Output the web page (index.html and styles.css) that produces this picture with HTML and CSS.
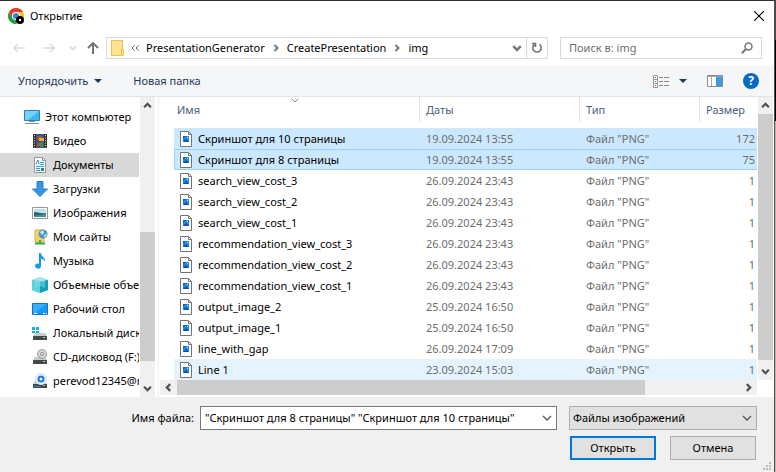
FILE: index.html
```html
<!DOCTYPE html>
<html lang="ru">
<head>
<meta charset="utf-8">
<title>Открытие</title>
<link rel="stylesheet" href="styles.css">
</head>
<body>
<svg class="defs" aria-hidden="true">
  <symbol id="png" viewBox="0 0 12 16">
    <path d="M.5.5h8l3 3v12H.5z" fill="#fff" stroke="#737373"/>
    <path d="M8.5.5v3h3" fill="none" stroke="#737373"/>
    <path d="M3 5h6v6H3z" fill="#2089e0"/>
    <path d="M3 5h3L3 8z" fill="#1263b8"/>
    <path d="M3 11l3-3 3 3z" fill="#0d50a8"/>
    <path d="M7 6h1v1H7z" fill="#b8e2fb"/>
  </symbol>
  <symbol id="drive" viewBox="0 0 16 16">
    <path d="M3 8h10l2 3H1z" fill="#c9cbcc"/>
    <path d="M1 11h14v4H1z" fill="#45494c"/>
    <path d="M11 12h2v1h-2z" fill="#69e58b"/>
  </symbol>
  <symbol id="chev" viewBox="0 0 8 8"><path d="M1 2.5L4 5.5L7 2.5" fill="none" stroke="currentColor" stroke-width="2"/></symbol>
  <symbol id="thin" viewBox="0 0 10 6"><path d="M1 1L5 5L9 1" fill="none" stroke="currentColor" stroke-width="1.3"/></symbol>
</svg>
<div class="dialog">
  <header class="title">
    <svg width="16" height="16" viewBox="0 0 16 16"><circle cx="8" cy="8" r="8" fill="#fbc116"/><path d="M1.1 4A8 8 0 0 1 14.9 4H8L4.5 10z" fill="#e33b2e"/><path d="M1.1 4A8 8 0 0 0 8 16L11.5 10 8 8 4.5 10z" fill="#229a48"/><circle cx="8" cy="8" r="4" fill="#fff"/><circle cx="8" cy="8" r="3" fill="#347fe8"/><circle cx="12" cy="12" r="4" fill="#000"/><circle cx="12" cy="12" r="1.2" fill="#fff"/></svg>
    <h1>Открытие</h1>
    <button class="close" aria-label="Закрыть"><svg width="10" height="10" viewBox="0 0 10 10"><path d="M0 0L10 10M10 0L0 10" stroke="#000" stroke-width="1.1"/></svg></button>
  </header>
  <nav class="nav">
    <div class="arrows">
      <button aria-label="Назад"><svg width="12" height="10" viewBox="0 0 12 10"><path d="M12 5H1M5 1L1 5L5 9" fill="none" stroke="#dcdcdc" stroke-width="1.6"/></svg></button>
      <button aria-label="Вперёд"><svg width="12" height="10" viewBox="0 0 12 10"><path d="M0 5H11M7 1L11 5L7 9" fill="none" stroke="#dcdcdc" stroke-width="1.6"/></svg></button>
      <button class="recent" aria-label="Последние"><svg width="8" height="8"><use href="#chev"/></svg></button>
      <button aria-label="Вверх"><svg width="12" height="12" viewBox="0 0 12 12"><path d="M6 12V1M1 6L6 1L11 6" fill="none" stroke="#757575" stroke-width="2"/></svg></button>
    </div>
    <div class="address">
      <svg class="folder" width="13" height="16" viewBox="0 0 13 16"><path d="M.5.5h11v15H.5z" fill="#ffe391" stroke="#e9c550"/><path d="M10.5 9.500h2v6h-2z" fill="#ffe391" stroke="#e9c550"/></svg>
      <svg class="dbl" width="8" height="6" viewBox="0 0 8 6"><path d="M3.500.5L1 3l2.500 2.500M7.500.5L5 3l2.500 2.500" fill="none" stroke="#666"/></svg>
      <a href="#pg">PresentationGenerator</a>
      <svg class="crumb" width="8" height="8"><use href="#chev"/></svg>
      <a href="#cp">CreatePresentation</a>
      <svg class="crumb" width="8" height="8"><use href="#chev"/></svg>
      <a href="#img">img</a>
      <button class="drop" aria-label="Предыдущие расположения"><svg width="10" height="10"><use href="#chev"/></svg></button>
      <button class="refresh" aria-label="Обновить"><svg width="12" height="12" viewBox="0 0 12 12"><path d="M3.500 2.500A4.200 4.200 0 1 0 8.500 2.500M1 1.500H4.500V5" fill="none" stroke="#757575" stroke-width="1.6"/></svg></button>
    </div>
    <div class="search">
      <input type="text" placeholder="Поиск в: img" aria-label="Поиск в: img">
      <svg width="12" height="12" viewBox="0 0 12 12"><circle cx="7.500" cy="4.500" r="3.500" fill="none" stroke="#777" stroke-width="1.5"/><path d="M5 7L.8 11.200" stroke="#777" stroke-width="2"/></svg>
    </div>
  </nav>
  <div class="tools">
    <button class="organize">Упорядочить<i class="tri"></i></button>
    <button>Новая папка</button>
    <div class="right">
      <button class="view" aria-label="Вид"><svg width="16" height="13" viewBox="0 0 16 13"><path d="M.5.5h4v12h-4zM.5 4.500h4M.5 8.500h4" fill="#fff" stroke="#999"/><path d="M2 2h1v1H2z" fill="#555"/><path d="M2 6h1v1H2z" fill="#2583d8"/><path d="M2 10h1v1H2z" fill="#d02525"/><path d="M6 2.500h4m1 0h5M6 6.500h4m1 0h5M6 10.500h4m1 0h5" stroke="#888"/></svg><i class="tri"></i></button>
      <button aria-label="Область просмотра"><svg width="16" height="12" viewBox="0 0 16 12"><path d="M.5.5h15v11H.5z" fill="#fff" stroke="#888"/><path d="M1 1h14v1H1z" fill="#aaa"/><path d="M4.500 2v9" stroke="#aaa"/><path d="M9 2h6v9H9z" fill="#3a9ce5"/></svg></button>
      <button class="help" aria-label="Справка">?</button>
    </div>
  </div>
  <main class="body">
    <aside class="side">
      <ul class="tree">
        <li class="root"><svg width="16" height="16" viewBox="0 0 16 16"><path d="M.5 1.500h15v10H.5z" fill="#42b4f2" stroke="#397ca5"/><path d="M1 2h14L4 11H1z" fill="#75d2fb"/><path d="M5 12h6v1H5zM1 14h14v1H1z" fill="#8099a9"/></svg><span>Этот компьютер</span></li>
        <li><svg width="16" height="16" viewBox="0 0 16 16"><path d="M1 1h14v14H1z" fill="#333"/><path d="M4 1h8v14H4z" fill="#36558e"/><path d="M5 3h5v4H5z" fill="#b14c2d"/><path d="M7 5h5v3H7z" fill="#e8b234"/><path d="M5 10h6v3H5z" fill="#c64e30"/><path d="M8 9h3v5H8z" fill="#56863b"/><path d="M2.500 2v13M13.500 2v13" stroke="#ddd" stroke-dasharray="1 1.500"/></svg><span>Видео</span></li>
        <li class="on"><svg width="16" height="16" viewBox="0 0 16 16"><path d="M2.500.5h8l3 3v12h-11z" fill="#fff" stroke="#8c989e"/><path d="M10.500.5v3h3" fill="none" stroke="#8c989e"/><path d="M4 7l2-4 1 4M8 5.500h4M8 7.500h4M4 9.500h8M4 11.500h4M4 13.500h4" fill="none" stroke="#259cdb"/><path d="M9 11h3v3H9z" fill="#43816b"/></svg><span>Документы</span></li>
        <li><svg width="16" height="16" viewBox="0 0 16 16"><path d="M5 .5h6V8h4.500L8 15.500.5 8H5z" fill="#3595e5" stroke="#2a7cc7"/></svg><span>Загрузки</span></li>
        <li><svg width="16" height="16" viewBox="0 0 16 16"><path d="M.5 2.500h15v11H.5z" fill="#fff" stroke="#969696"/><path d="M2 4h12v8H2z" fill="#b9e1f1"/><path d="M2 7c5 0 8 2 12 1v4H2z" fill="#2a6770"/><path d="M2 11l12-2v3H2z" fill="#4b8ea4"/></svg><span>Изображения</span></li>
        <li><svg width="16" height="16" viewBox="0 0 16 16"><path d="M3 1h9v12H3z" fill="#f5d365" stroke="#dbb13f"/><circle cx="11" cy="5" r="4.500" fill="#4b9bc7"/><path d="M8 3l3-2 1 3-2 2zM12 6l3-1-2 4z" fill="#c8e6ef"/><path d="M8 11v3M3 14.500h10" stroke="#36a852" stroke-width="2"/></svg><span>Мои сайты</span></li>
        <li><svg width="16" height="16" viewBox="0 0 16 16"><path d="M7 0h2c0 4 5 4 4 9-1-3-2-3-4-3v7c0 4-6 3-6 0 0-2 2-3 4-2z" fill="#159ce9"/></svg><span>Музыка</span></li>
        <li><svg width="16" height="16" viewBox="0 0 16 16"><path d="M0 3l8-3 8 3v10l-8 3-8-3z" fill="#35bdd0"/><path d="M0 3l8-3 8 3-8 2z" fill="#a2eaf0"/><path d="M0 3l8 2v11l-8-3z" fill="#5fd1dc"/><path d="M8 5v11l8-3V3z" fill="#159fb8"/><path d="M3 4l5-2 5 2v7l-5-2-5 2z" fill="#88dce3" opacity=".5"/></svg><span>Объемные объекты</span></li>
        <li><svg width="16" height="16" viewBox="0 0 16 16"><path d="M.5 2.500h15v11H.5z" fill="#169af4" stroke="#1474bd"/><path d="M1 3h13L3 12H1z" fill="#36b1ff"/><path d="M2 12.500h3m6 0h2m1 0h1" stroke="#fff"/></svg><span>Рабочий стол</span></li>
        <li><svg width="16" height="16" viewBox="0 0 16 16"><use href="#drive"/><path d="M0 2h3v3H0zM4 2h3v3H4zM0 6h3v2H0zM4 6h3v2H4z" fill="#18ace8"/></svg><span>Локальный диск (C:)</span></li>
        <li><svg width="16" height="16" viewBox="0 0 16 16"><use href="#drive"/><circle cx="10" cy="5" r="4.500" fill="#d6d8d8" stroke="#999"/><circle cx="10" cy="5" r="1.500" fill="#fff" stroke="#888"/></svg><span>CD-дисковод (F:)</span></li>
        <li><svg width="16" height="16" viewBox="0 0 16 16"><use href="#drive"/><circle cx="9" cy="6" r="5.500" fill="#f2f6fb" stroke="#d3dce5"/><circle cx="9" cy="6" r="2.500" fill="none" stroke="#1676e2" stroke-width="2"/><path d="M2 13.500h6" stroke="#2586ed"/></svg><span>perevod12345@mail.ru</span></li>
      </ul>
      <div class="vbar"><svg class="up" width="9" height="9"><use href="#chev"/></svg><div class="thumb low"></div><svg class="down" width="9" height="9"><use href="#chev"/></svg></div>
    </aside>
    <section class="files">
      <div class="list">
        <svg class="sort" width="8" height="5" viewBox="0 0 8 5"><path d="M.5.5L4 4L7.500.5" fill="none" stroke="#888"/></svg>
        <table>
          <colgroup><col><col class="c2"><col class="c3"><col class="c4"></colgroup>
          <thead><tr><th>Имя</th><th>Даты</th><th>Тип</th><th>Размер</th></tr></thead>
          <tbody>
            <tr class="sel"><td><svg width="12" height="16"><use href="#png"/></svg>Скриншот для 10 страницы</td><td>19.09.2024 13:55</td><td>Файл "PNG"</td><td>172</td></tr>
            <tr class="sel focus"><td><svg width="12" height="16"><use href="#png"/></svg>Скриншот для 8 страницы</td><td>19.09.2024 13:55</td><td>Файл "PNG"</td><td>75</td></tr>
            <tr><td><svg width="12" height="16"><use href="#png"/></svg>search_view_cost_3</td><td>26.09.2024 23:43</td><td>Файл "PNG"</td><td>1</td></tr>
            <tr><td><svg width="12" height="16"><use href="#png"/></svg>search_view_cost_2</td><td>26.09.2024 23:43</td><td>Файл "PNG"</td><td>1</td></tr>
            <tr><td><svg width="12" height="16"><use href="#png"/></svg>search_view_cost_1</td><td>26.09.2024 23:43</td><td>Файл "PNG"</td><td>1</td></tr>
            <tr><td><svg width="12" height="16"><use href="#png"/></svg>recommendation_view_cost_3</td><td>26.09.2024 23:43</td><td>Файл "PNG"</td><td>1</td></tr>
            <tr><td><svg width="12" height="16"><use href="#png"/></svg>recommendation_view_cost_2</td><td>26.09.2024 23:43</td><td>Файл "PNG"</td><td>1</td></tr>
            <tr><td><svg width="12" height="16"><use href="#png"/></svg>recommendation_view_cost_1</td><td>26.09.2024 23:43</td><td>Файл "PNG"</td><td>1</td></tr>
            <tr><td><svg width="12" height="16"><use href="#png"/></svg>output_image_2</td><td>25.09.2024 16:50</td><td>Файл "PNG"</td><td>1</td></tr>
            <tr><td><svg width="12" height="16"><use href="#png"/></svg>output_image_1</td><td>25.09.2024 16:50</td><td>Файл "PNG"</td><td>1</td></tr>
            <tr><td><svg width="12" height="16"><use href="#png"/></svg>line_with_gap</td><td>26.09.2024 17:09</td><td>Файл "PNG"</td><td>1</td></tr>
            <tr class="hover"><td><svg width="12" height="16"><use href="#png"/></svg>Line 1</td><td>23.09.2024 15:03</td><td>Файл "PNG"</td><td>1</td></tr>
          </tbody>
        </table>
      </div>
      <div class="vbar"><svg class="up" width="9" height="9"><use href="#chev"/></svg><div class="thumb high"></div><svg class="down" width="9" height="9"><use href="#chev"/></svg></div>
      <div class="hbar"><svg class="lt" width="9" height="9"><use href="#chev"/></svg><div class="thumb"></div><svg class="rt" width="9" height="9"><use href="#chev"/></svg></div>
    </section>
  </main>
  <footer class="foot">
    <div class="line">
      <label for="name">Имя файла:</label>
      <div class="combo"><input id="name" type="text" value="&quot;Скриншот для 8 страницы&quot; &quot;Скриншот для 10 страницы&quot;"><svg width="10" height="6"><use href="#thin"/></svg></div>
      <div class="filter"><select aria-label="Тип файлов"><option>Файлы изображений</option></select><svg width="10" height="6"><use href="#thin"/></svg></div>
    </div>
    <div class="actions"><button class="primary">Открыть</button><button>Отмена</button></div>
    <svg class="grip" width="8" height="8" viewBox="0 0 8 8"><path d="M6 0h2v2H6zM3 3h2v2H3zM6 3h2v2H6zM0 6h2v2H0zM3 6h2v2H3zM6 6h2v2H6z" fill="#bbb"/></svg>
  </footer>
</div>
</body>
</html>
```
FILE: styles.css
```css
* { box-sizing: border-box; }
body { margin: 0; background: linear-gradient(#48464a 40px, #000 40px, #000 121px, #c4b5a7 121px); font: 11px/16px "Noto Sans", "Open Sans", sans-serif; color: #000; }
button, input, select { font: inherit; color: inherit; }
button { border: 0; padding: 0; background: none; }
svg { display: block; flex: none; }
a { color: inherit; text-decoration: none; }
.defs { position: absolute; width: 0; height: 0; }
.dialog { margin-right: 1px; min-height: 100vh; display: flex; flex-direction: column; background: #fff; border-top: 1px solid #333034; border-right: 1px solid #55514f; }

.title { display: flex; align-items: center; height: 29px; padding: 0 10px 0 8px; }
.title h1 { flex: 1; margin: 0 0 0 6px; font-size: 11px; font-weight: 400; }

.nav { display: flex; height: 36px; padding: 7px 12px 7px 13px; }
.arrows { display: flex; align-items: center; gap: 18px; width: 93px; }
.arrows .recent { color: #dcdcdc; margin: 0 -8px 0 -4px; }
.address { flex: 1; display: flex; align-items: center; border: 1px solid #d9d9d9; padding-left: 4px; }
.folder { margin-right: 7px; }
.dbl { margin-right: 7px; }
.crumb { color: #777; transform: rotate(-90deg); margin: 0 7px; }
.drop { margin-left: auto; padding: 0 4px; color: #777; }
.refresh { display: flex; align-items: center; align-self: stretch; padding: 0 4px; border-left: 1px solid #d9d9d9; }
.search { display: flex; align-items: center; width: 202px; margin-left: 12px; border: 1px solid #d9d9d9; padding: 0 8px; }
.search input { flex: 1; min-width: 0; border: 0; padding: 0; outline: 0; }
.search input::placeholder { color: #6d6d6d; }

.tools { display: flex; align-items: center; height: 31px; padding: 0 15px 0 18px; background: #f5f6f7; border-bottom: 1px solid #e5e5e5; color: #1e395b; }
.tools button { display: flex; align-items: center; gap: 6px; }
.organize { margin-right: 31px; }
.tri { border: 4px solid transparent; border-top-color: #1e395b; border-bottom: 0; }
.right { display: flex; align-items: center; gap: 20px; margin-left: auto; }
.tools .view { gap: 10px; }
.tools .help { justify-content: center; width: 16px; height: 16px; border-radius: 8px; background: #0869c5; color: #fff; font-size: 12px; font-weight: 700; }

.body { display: flex; }
.side { display: flex; width: 159px; padding-right: 3px; border-right: 1px solid #eee; }
.tree { flex: 1; min-width: 0; margin: 0 1px 0 0; padding: 8px 0 3px; list-style: none; }
.tree li { display: flex; align-items: center; gap: 5px; height: 24px; padding-left: 32px; overflow: hidden; white-space: nowrap; }
.tree .root { padding-left: 24px; }
.tree .on { background: #d9d9d9; }
.vbar { display: flex; flex-direction: column; align-items: center; width: 15px; padding: 4px 0; background: #f0f0f0; color: #505050; }
.up { transform: rotate(180deg); }
.down { margin-top: auto; }
.thumb { background: #cdcdcd; }
.low { width: 15px; height: 129px; margin-top: 122px; }
.high { width: 15px; height: 246px; margin-top: 4px; }

.files { flex: 1; display: grid; grid-template-columns: 1fr 15px; grid-template-rows: 1fr 17px; column-gap: 1px; padding: 0 1px; }
.list { position: relative; padding-left: 14px; }
.sort { position: absolute; left: 131px; top: 1px; }
table { width: 100%; table-layout: fixed; border-collapse: separate; border-spacing: 0; }
.c2 { width: 160px; }
.c3 { width: 120px; }
.c4 { width: 58px; }
th { height: 25px; padding: 0 0 0 6px; border-left: 1px solid #e5e5e5; text-align: left; font-weight: 400; color: #4c607a; }
th:first-child { border: 0; padding-left: 3px; }
thead::after { content: ""; display: block; height: 6px; }
td { height: 21px; padding: 0 0 0 7px; color: #6d6d6d; white-space: nowrap; }
td:first-child { display: flex; align-items: center; gap: 6px; padding-left: 6px; color: #000; }
td:last-child { padding-right: 2px; text-align: right; }
.sel td { background: #cce8ff; }
.focus td { border: solid #99d1ff; border-width: 1px 0; }
.focus td:first-child { border-left-width: 1px; padding-left: 5px; }
.hover td { background: #e5f3ff; }
.hbar { display: flex; align-items: center; height: 15px; padding: 0 4px; background: #f0f0f0; color: #505050; }
.hbar .thumb { width: 468px; height: 15px; margin-left: 4px; }
.lt { transform: rotate(90deg); }
.rt { transform: rotate(-90deg); margin-left: auto; }

.foot { position: relative; flex: 1; padding: 9px 17px 0 0; background: #f0f0f0; }
.line, .actions { display: flex; justify-content: flex-end; align-items: center; }
.line label { margin-left: auto; margin-right: 6px; }
.combo { display: flex; align-items: center; width: 357px; height: 24px; padding: 0 4px; border: 1px solid #7a7a7a; background: #fff; }
.combo input { flex: 1; min-width: 0; padding: 0; border: 0; outline: 0; background: none; }
.filter { display: flex; align-items: center; width: 188px; height: 24px; margin-left: 12px; padding-right: 4px; border: 1px solid #adadad; background: #e1e1e1; }
.filter select { flex: 1; appearance: none; border: 0; padding: 0 0 0 3px; background: none; }
.combo svg, .filter svg { color: #555; }
.actions { gap: 14px; margin: 6px 1px 0 0; }
.actions button { width: 86px; height: 24px; border: 1px solid #adadad; background: #e1e1e1; }
.actions .primary { border: 2px solid #0078d7; }
.grip { position: absolute; right: 3px; bottom: 2px; }
```
